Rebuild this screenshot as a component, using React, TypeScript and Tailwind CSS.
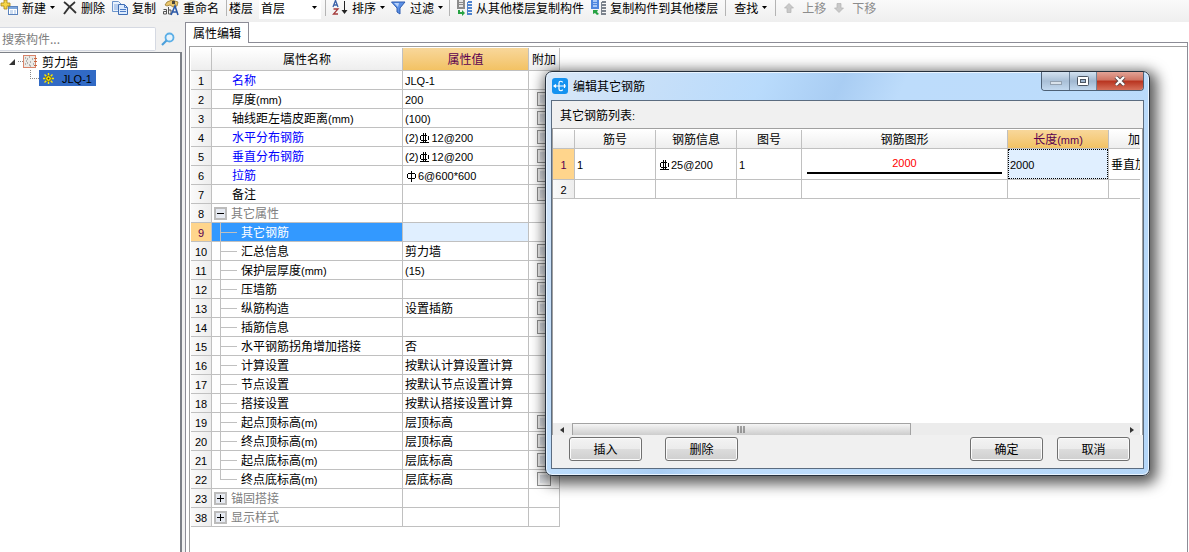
import { Fragment } from "react"
import type { ReactNode } from "react"

type Row = {
  no: number
  name: string
  value?: string
  key?: boolean
  group?: "open" | "closed"
  child?: boolean
  last?: boolean
  check?: boolean
  selected?: boolean
}

const rows: Row[] = [
  { no: 1, name: "名称", value: "JLQ-1", key: true },
  { no: 2, name: "厚度(mm)", value: "200", check: true },
  { no: 3, name: "轴线距左墙皮距离(mm)", value: "(100)", check: true },
  { no: 4, name: "水平分布钢筋", value: "(2)#12@200", key: true, check: true },
  { no: 5, name: "垂直分布钢筋", value: "(2)#12@200", key: true, check: true },
  { no: 6, name: "拉筋", value: "$6@600*600", key: true, check: true },
  { no: 7, name: "备注", check: true },
  { no: 8, name: "其它属性", group: "open" },
  { no: 9, name: "其它钢筋", child: true, selected: true },
  { no: 10, name: "汇总信息", value: "剪力墙", child: true, check: true },
  { no: 11, name: "保护层厚度(mm)", value: "(15)", child: true, check: true },
  { no: 12, name: "压墙筋", child: true, check: true },
  { no: 13, name: "纵筋构造", value: "设置插筋", child: true, check: true },
  { no: 14, name: "插筋信息", child: true, check: true },
  { no: 15, name: "水平钢筋拐角增加搭接", value: "否", child: true },
  { no: 16, name: "计算设置", value: "按默认计算设置计算", child: true },
  { no: 17, name: "节点设置", value: "按默认节点设置计算", child: true },
  { no: 18, name: "搭接设置", value: "按默认搭接设置计算", child: true },
  { no: 19, name: "起点顶标高(m)", value: "层顶标高", child: true, check: true },
  { no: 20, name: "终点顶标高(m)", value: "层顶标高", child: true, check: true },
  { no: 21, name: "起点底标高(m)", value: "层底标高", child: true, check: true },
  { no: 22, name: "终点底标高(m)", value: "层底标高", child: true, last: true, check: true },
  { no: 23, name: "锚固搭接", group: "closed" },
  { no: 38, name: "显示样式", group: "closed" },
]

// steel grade marks: # is the ribbed bar, $ the plain one
const Bar = ({ ribbed }: { ribbed: boolean }) => (
  <svg
    role="img"
    aria-label={ribbed ? "三级钢" : "一级钢"}
    viewBox="0 0 11 11"
    className="mx-px inline-block h-[11px] w-[11px] align-[-2px]"
    fill="none"
    stroke="currentColor"
    shapeRendering="crispEdges">
    {ribbed ? (
      <path d="M2 2.5h6M1.5 3v4M9.5 3v4M2 7.5h6M4.5 0v10M6.5 0v10M1 5.5h0M1 9.5h9" />
    ) : (
      <path d="M2 2.5h7M1.5 3v4M9.5 3v4M2 7.5h7M5.5 0v11" />
    )}
  </svg>
)

const Txt = ({ children }: { children: string }) => (
  <>
    {children.split(/([#$]|[!-"%-~]+)/).map((part, i) => {
      if (part === "#" || part === "$") return <Bar key={i} ribbed={part === "#"} />
      if (/^[!-~]/.test(part))
        return (
          <span key={i} className="font-['Liberation_Sans',sans-serif] text-[11px] leading-none">
            {part}
          </span>
        )
      return <Fragment key={i}>{part}</Fragment>
    })}
  </>
)

const Caret = () => (
  <svg viewBox="0 0 5 3" className="h-[3px] w-[5px] shrink-0" aria-hidden="true">
    <path d="M0 0h5L2.5 3z" fill="#000" />
  </svg>
)

const Sep = () => <span className="h-4 w-px shrink-0 bg-[#b4b4b4]" />

const Tool = ({
  icon,
  label,
  caret,
  disabled,
}: {
  icon?: ReactNode
  label: string
  caret?: boolean
  disabled?: boolean
}) => (
  <button
    type="button"
    disabled={disabled}
    className="flex shrink-0 items-center gap-1 whitespace-nowrap disabled:text-[#8c8c8c]">
    {icon}
    <span>{label}</span>
    {caret && <Caret />}
  </button>
)

const NewIcon = () => (
  <svg viewBox="0 0 18 16" className="h-4 w-[18px]" aria-hidden="true">
    <rect x="8.5" y="6.5" width="9" height="8" fill="#fff" stroke="#5b83bd" />
    <path d="M9 7h8v2H9z" fill="#7da6dc" />
    <path d="M10 11h3m1 0h2m-6 2h3m1 0h2" stroke="#9cbbe3" />
    <path d="M4 0h3v3h3v3H7v3H4V6H1V3h3z" fill="#f6d548" stroke="#a98512" strokeWidth=".8" />
  </svg>
)

const DeleteIcon = () => (
  <svg viewBox="0 0 14 14" className="h-[14px] w-[14px]" aria-hidden="true">
    <path d="M1 1c4 3 8 7 12 11M12 1C8 4 4 8 1 13" stroke="#333" strokeWidth="1.8" fill="none" />
  </svg>
)

const CopyIcon = () => (
  <svg viewBox="0 0 16 16" className="h-4 w-4" aria-hidden="true">
    <path d="M.5 1.5h6l3 3v7h-9z" fill="#e9f2fd" stroke="#6d95cc" />
    <path d="M2 5h4M2 7h4M2 9h4" stroke="#86a9dc" />
    <path d="M6.5 4.5h6l3 3v7h-9z" fill="#dceafc" stroke="#3f6db3" />
    <path d="M12.5 4.5v3h3M8 9.5h6M8 11.5h6" stroke="#4d7cc6" fill="none" />
  </svg>
)

const RenameIcon = () => (
  <svg viewBox="0 0 16 16" className="h-4 w-4" aria-hidden="true">
    <path d="M4 2l5-2 6 2-1 4-4 1-3-2-3 1-2-1z" fill="#eac66c" stroke="#8a6a20" strokeWidth=".7" />
    <path d="M9 1h3v3H9z" fill="#47433c" />
    <path d="M.5 9.5h3v4.500h-3v-2.500h3M5.500 7v7h2.500v-4H5.500" stroke="#555" fill="none" />
    <path d="M8 15l4-9 3 9M9.500 12h5" stroke="#2c59a8" strokeWidth="1.6" fill="none" />
  </svg>
)

const SortIcon = () => (
  <svg viewBox="0 0 16 16" className="h-4 w-4" aria-hidden="true">
    <path d="M1 7l2.500-6.500L6 7M2 5h3" stroke="#3b62a8" strokeWidth="1.3" fill="none" />
    <path d="M1.500 9H6l-4.500 5H6" stroke="#a53c3c" strokeWidth="1.3" fill="none" />
    <path d="M12.500 1v11" stroke="#222" />
    <path d="M9.500 10h6l-3 4z" fill="#222" />
  </svg>
)

const FilterIcon = () => (
  <svg viewBox="0 0 15 14" className="h-[14px] w-[15px]" aria-hidden="true">
    <path d="M.5 1h13.500L9 7v6l-3-2V7z" fill="#5b90e6" stroke="#2f5db0" />
    <path d="M3 2h5L7 6z" fill="#b7d1fa" />
  </svg>
)

const FloorIcon = ({ flip }: { flip?: boolean }) => (
  <svg viewBox="0 0 16 16" className="h-4 w-4" aria-hidden="true">
    <path d="M1 0h8v9H1z" fill={flip ? "#4f86de" : "#8c8c8c"} />
    <path d="M3 0h4v7H3z" fill={flip ? "#a9c8f6" : "#e4e4e4"} />
    <path d="M3 2.5h4M3 4.5h4" stroke={flip ? "#4f86de" : "#8c8c8c"} />
    <path
      d="M11 2h1v-1h4v2h-4v1h4v2h-4v1h4v2h-4v1h4v2h-4v1h4v2h-5z"
      fill={flip ? "#7b828c" : "#4f84cf"}
    />
    <path
      d={flip ? "M3 10h5l-1 2 2 2-2 1-2-2-2 1z" : "M2 10h2v2h2v-2l3 3-3 3v-2H2z"}
      fill="#27a243"
    />
  </svg>
)

const MoveIcon = ({ down }: { down?: boolean }) => (
  <svg viewBox="0 0 10 10" className={`mr-1 h-[10px] w-[10px] ${down ? "rotate-180" : ""}`} aria-hidden="true">
    <path d="M5 .5L9.500 5H7v4.500H3V5H.5z" fill="#c9c9c9" stroke="#b2b2b2" strokeWidth=".7" />
  </svg>
)

const Toolbar = () => (
  <div className="flex h-[22px] shrink-0 items-start overflow-hidden bg-gradient-to-b from-[#fafafa] to-[#efefef]">
    <div className="flex h-[15px] items-center">
      <Tool icon={<NewIcon />} label="新建" caret />
      <div className="ml-2 flex items-center gap-[7px]">
        <Tool icon={<DeleteIcon />} label="删除" />
        <Tool icon={<CopyIcon />} label="复制" />
        <Tool icon={<RenameIcon />} label="重命名" />
        <Sep />
      </div>
      <label htmlFor="floor" className="ml-[2px] shrink-0">
        楼层
      </label>
      <div className="ml-[6px] mr-1 grid h-[22px] w-[62px] shrink-0 items-center bg-white">
        <select id="floor" className="col-start-1 row-start-1 w-full appearance-none bg-transparent pl-[2px] outline-none">
          <option>首层</option>
        </select>
        <span className="pointer-events-none col-start-1 row-start-1 mr-1 justify-self-end">
          <Caret />
        </span>
      </div>
      <div className="flex items-center gap-[6px]">
        <Sep />
        <Tool icon={<SortIcon />} label="排序" caret />
        <Tool icon={<FilterIcon />} label="过滤" caret />
        <Sep />
        <Tool icon={<FloorIcon />} label="从其他楼层复制构件" />
        <Tool icon={<FloorIcon flip />} label="复制构件到其他楼层" />
      </div>
      <div className="ml-[7px] flex items-center gap-2">
        <Sep />
        <Tool label="查找" caret />
        <Sep />
        <Tool icon={<MoveIcon />} label="上移" disabled />
        <Tool icon={<MoveIcon down />} label="下移" disabled />
      </div>
    </div>
  </div>
)

const Sidebar = () => (
  <aside className="flex w-[182px] shrink-0 flex-col pt-1">
    <div className="flex h-[26px] shrink-0 items-center">
      <input
        type="text"
        aria-label="搜索构件"
        placeholder="搜索构件..."
        className="h-6 w-[156px] rounded-r-[2px] border border-l-0 border-[#d5d9e2] bg-white pb-[2px] pl-[2px] outline-none placeholder:text-[#7d7d7d]"
      />
      <button type="button" aria-label="搜索" className="ml-[5px]">
        <svg viewBox="0 0 14 14" className="h-[14px] w-[14px]">
          <circle cx="8.5" cy="5.5" r="4" fill="#e4f2fc" stroke="#5aaee6" strokeWidth="1.8" />
          <path d="M5.500 8.500L1 13" stroke="#4a9fdb" strokeWidth="2.2" />
        </svg>
      </button>
    </div>
    <div className="flex-1 border-r-2 border-t border-[#7c8087] bg-white pt-px">
      <div className="flex h-4 items-center">
        <svg viewBox="0 0 38 16" className="h-4 w-[38px]" aria-hidden="true">
          <path d="M9 11l6-6v6z" fill="#333" />
          <path d="M18 7.500h5" stroke="#888" strokeDasharray="1 1" />
          <rect x="23.5" y="1.5" width="12" height="12" fill="#eceae6" stroke="#d9846a" />
          <path d="M25 4h1m3-1h1m2 2h1M26 7h1m3 1h1m2 2h1M25 10h1m3 1h1m-3-6h1m-1 4h1m2 3h1" stroke="#777" />
          <path d="M34 4.500h3M34 7.500h3M34 11.500h3" stroke="#c8673f" />
        </svg>
        <span className="ml-1">剪力墙</span>
      </div>
      <div className="flex h-4 items-center">
        <svg viewBox="0 0 39 16" className="h-4 w-[39px]" aria-hidden="true">
          <path d="M30.500 0v8M30 8.500h9" stroke="#888" strokeDasharray="1 1" fill="none" />
        </svg>
        <span className="flex h-4 w-[57px] items-center gap-2 bg-[#316ac5] pl-1">
          <svg viewBox="0 0 11 11" className="h-[11px] w-[11px]" aria-hidden="true">
            <path d="M5.500 0v11M0 5.500h11M1.500 1.500l8 8M9.500 1.500l-8 8" stroke="#ffe800" strokeWidth="1.4" />
            <circle cx="5.5" cy="5.5" r="2.8" fill="#ffe800" stroke="#3b3a18" strokeWidth=".7" />
            <circle cx="5.5" cy="5.5" r="1" fill="#3b3a18" />
          </svg>
          <span>
            <Txt>JLQ-1</Txt>
          </span>
        </span>
      </div>
    </div>
  </aside>
)

const NameCell = ({ row }: { row: Row }) => (
  <div className="flex h-[18px] items-center">
    {row.group && (
      <button
        type="button"
        aria-label={row.name}
        aria-expanded={row.group === "open"}
        className="ml-[2px] mr-1 grid h-[13px] w-[13px] place-items-center border-2 border-[#bcbcbc] bg-[#e6eaf2]">
        <svg viewBox="0 0 7 7" className="h-[7px] w-[7px]">
          <path d={row.group === "open" ? "M0 3.500h7" : "M0 3.500h7M3.500 0v7"} stroke="#000" />
        </svg>
      </button>
    )}
    {row.child && (
      <span className="ml-2 mr-1 flex h-[18px] w-[17px] flex-col">
        <span className="h-[9px] border-l border-[#c0c0c0]" />
        <span className="h-px bg-[#c0c0c0]" />
        {!row.last && <span className="h-2 border-l border-[#c0c0c0]" />}
      </span>
    )}
    <span className={row.group || row.child ? "" : "ml-5"}>
      <Txt>{row.name}</Txt>
    </span>
  </div>
)

const PropertyTable = () => (
  <table className="w-[369px] table-fixed border-separate border-spacing-0 leading-[18px]">
    <colgroup>
      <col className="w-[21px]" />
      <col className="w-[191px]" />
      <col className="w-[126px]" />
      <col className="w-[31px]" />
    </colgroup>
    <thead>
      <tr className="h-[23px] bg-gradient-to-b from-white to-[#ededed] *:border-b *:border-r *:border-[#c0c0c0] *:p-0 *:font-normal">
        <th aria-label="序号" />
        <th>属性名称</th>
        <th className="bg-gradient-to-b from-[#f8d79a] to-[#f3c263] text-[#5a0050]">属性值</th>
        <th className="whitespace-nowrap">附加</th>
      </tr>
    </thead>
    <tbody>
      {rows.map((row) => (
        <tr key={row.no} className="h-[19px] *:border-b *:border-r *:border-[#c0c0c0] *:p-0">
          <td
            className={
              row.selected ? "bg-[#ffd58c] text-[#5a0050]" : "bg-gradient-to-r from-[#fafafa] to-[#ededed]"
            }>
            <div className="h-[18px] text-center">
              <Txt>{String(row.no)}</Txt>
            </div>
          </td>
          <td
            className={
              row.selected ? "bg-[#3399ff] text-white" : row.key ? "text-[#0000ff]" : row.group ? "text-[#808080]" : ""
            }>
            <NameCell row={row} />
          </td>
          <td className={row.selected ? "bg-[#e0efff]" : ""}>
            <div className="h-[18px] whitespace-nowrap pl-[2px]">
              <Txt>{row.value ?? ""}</Txt>
            </div>
          </td>
          <td>
            {row.check && (
              <input
                type="checkbox"
                aria-label={`附加 ${row.name}`}
                className="mx-auto block h-[14px] w-[14px] appearance-none border border-[#8e8f8f] bg-gradient-to-br from-[#c9ced6] to-[#f6f6f6] shadow-[inset_0_0_0_2px_#f0f0f0]"
              />
            )}
          </td>
        </tr>
      ))}
    </tbody>
  </table>
)

const DialogButton = ({ children }: { children: string }) => (
  <button
    type="button"
    className="h-6 w-[73px] rounded-[3px] border border-[#707070] bg-[linear-gradient(#f3f3f3_0%,#ebebeb_50%,#dcdcdc_51%,#cfcfcf_100%)] shadow-[inset_0_0_0_1px_#fbfbfb]">
    {children}
  </button>
)

const BarTable = () => (
  <table className="w-[620px] table-fixed border-separate border-spacing-0 leading-4">
    <colgroup>
      <col className="w-[22px]" />
      <col className="w-[81px]" />
      <col className="w-[81px]" />
      <col className="w-[65px]" />
      <col className="w-[206px]" />
      <col className="w-[101px]" />
      <col className="w-16" />
    </colgroup>
    <thead>
      <tr className="h-[19px] bg-gradient-to-b from-white to-[#ededed] *:border-b *:border-r *:border-[#c0c0c0] *:p-0 *:font-normal">
        <th aria-label="序号" />
        <th>筋号</th>
        <th>钢筋信息</th>
        <th>图号</th>
        <th>钢筋图形</th>
        <th className="bg-gradient-to-b from-[#f8d79a] to-[#f3c263] text-[#5a0050]">
          <Txt>长度(mm)</Txt>
        </th>
        <th className="text-left">
          <span className="pl-[19px]">加</span>
        </th>
      </tr>
    </thead>
    <tbody>
      <tr className="h-[31px] *:border-b *:border-r *:border-[#c0c0c0] *:p-0">
        <td className="bg-[#ffd58c] text-center text-[#5a0050]">
          <Txt>1</Txt>
        </td>
        <td>
          <span className="pl-[2px]">
            <Txt>1</Txt>
          </span>
        </td>
        <td>
          <span className="pl-[2px]">
            <Txt>#25@200</Txt>
          </span>
        </td>
        <td>
          <span className="pl-[2px]">
            <Txt>1</Txt>
          </span>
        </td>
        <td>
          <div className="mx-[5px] border-b-2 border-black pb-[2px] text-center text-[#ff0000]">
            <Txt>2000</Txt>
          </div>
        </td>
        <td>
          <div className="flex h-[30px] items-center border border-dotted border-black bg-[#e0efff] pl-px">
            <span>
              <Txt>2000</Txt>
            </span>
          </div>
        </td>
        <td>
          <span className="pl-[2px]">垂直加</span>
        </td>
      </tr>
      <tr className="h-[19px] *:border-b *:border-r *:border-[#c0c0c0] *:p-0">
        <td className="bg-gradient-to-r from-[#fafafa] to-[#ededed] text-center">
          <Txt>2</Txt>
        </td>
        <td />
        <td />
        <td />
        <td />
        <td />
        <td />
      </tr>
    </tbody>
  </table>
)

const RebarDialog = () => (
  <div
    role="dialog"
    aria-labelledby="dialog-title"
    className="absolute left-[545px] top-[71px] flex h-[405px] w-[605px] flex-col rounded-[7px] border border-[#26303c] bg-[linear-gradient(115deg,#dbe9f8_0%,#c9e0f8_12%,#b9dbfc_28%,#a9cdf3_38%,#bddcfb_46%,#bcdcfb_70%,#b4d6f8_100%)] px-[5px] pb-[6px] shadow-[3px_4px_14px_4px_rgba(0,0,0,0.65),inset_0_0_0_1px_#e9f4ff]">
    <div className="flex h-7 shrink-0 items-start justify-between">
      <div className="flex h-7 items-center gap-[5px] pl-px">
        <svg viewBox="0 0 16 16" className="h-4 w-4" aria-hidden="true">
          <rect width="16" height="16" rx="3" fill="#1492f0" />
          <path
            d="M2 8h12M4 6.500L2 8l2 1.500M12.500 6v4M10.500 4.500C10.500 3 7 2.500 7 5v6c0 2.500 3.500 2 3.500 .5"
            stroke="#fff"
            strokeWidth="1.2"
            fill="none"
          />
        </svg>
        <h2 id="dialog-title">编辑其它钢筋</h2>
      </div>
      <div className="flex h-[19px] overflow-hidden rounded-b-[4px] border border-t-0 border-[#4d6075]">
        <button
          type="button"
          aria-label="最小化"
          className="grid w-7 place-items-center border-r border-[#6d8299] bg-gradient-to-b from-[#d4e2f0] via-[#a9bfd6] to-[#c3d9ef]">
          <span className="mt-1 h-1 w-3 border border-[#93a1b0] bg-[#d9e2eb]" />
        </button>
        <button
          type="button"
          aria-label="最大化"
          className="grid w-[27px] place-items-center border-r border-[#6d8299] bg-gradient-to-b from-[#d4e2f0] via-[#a0b7d0] to-[#c3d9ef]">
          <svg viewBox="0 0 12 10" className="h-[10px] w-3">
            <rect x=".5" y=".5" width="11" height="9" rx="1" fill="#fff" stroke="#4b5563" />
            <rect x="3.5" y="3.5" width="5" height="3" fill="#9db4cd" stroke="#4b5563" />
          </svg>
        </button>
        <button
          type="button"
          aria-label="关闭"
          className="grid w-[46px] place-items-center bg-[linear-gradient(#e2a396_0%,#cf7463_45%,#b8331f_50%,#d6705a_100%)]">
          <svg viewBox="0 0 12 10" className="h-[10px] w-3">
            <path d="M2 1l8 8M10 1L2 9" stroke="#5b4444" strokeWidth="4" />
            <path d="M2 1l8 8M10 1L2 9" stroke="#fff" strokeWidth="2.4" />
          </svg>
        </button>
      </div>
    </div>
    <div className="flex min-h-0 flex-1 flex-col border border-[#5b6c80] bg-[#f0f0f0]">
      <p className="h-[27px] shrink-0 px-2 leading-7">
        <Txt>其它钢筋列表:</Txt>
      </p>
      <div className="flex min-h-0 flex-1 flex-col overflow-hidden border border-b-0 border-[#a0a0a0] bg-white pr-[2px] pt-px">
        <div className="flex-1 overflow-hidden">
          <BarTable />
        </div>
        <div className="flex h-3 shrink-0 items-center bg-[#ececec]">
          <svg viewBox="0 0 19 12" className="h-3 w-[19px]" aria-hidden="true">
            <path d="M11 4v6L7 7z" fill="#333" />
          </svg>
          <div className="grid h-3 w-[339px] place-items-center border border-b-0 border-[#a3a3a3] bg-gradient-to-b from-[#f5f5f5] to-[#cdcdcd]">
            <svg viewBox="0 0 9 7" className="h-[7px] w-[9px]" aria-hidden="true">
              <path d="M1 0v7M4 0v7M7 0v7" stroke="#555" />
            </svg>
          </div>
          <svg viewBox="0 0 19 12" className="ml-auto h-3 w-[19px]" aria-hidden="true">
            <path d="M9 4v6l4-3z" fill="#333" />
          </svg>
        </div>
      </div>
      <div className="flex h-[33px] shrink-0 items-start justify-between pl-[17px] pr-[13px] pt-[2px]">
        <div className="flex gap-[23px]">
          <DialogButton>插入</DialogButton>
          <DialogButton>删除</DialogButton>
        </div>
        <div className="flex gap-[14px]">
          <DialogButton>确定</DialogButton>
          <DialogButton>取消</DialogButton>
        </div>
      </div>
    </div>
  </div>
)

const App = () => (
  <div className="relative flex h-screen flex-col overflow-hidden bg-[#f0f0f0] font-['Noto_Sans_CJK_SC',sans-serif] text-[12px] leading-[18px] text-black">
    <Toolbar />
    <div className="flex min-h-0 flex-1">
      <Sidebar />
      <main className="ml-[3px] flex min-w-0 flex-1 flex-col bg-white pr-px">
        <div className="flex h-[21px] shrink-0">
          <div role="tablist" className="flex">
            <button
              type="button"
              role="tab"
              aria-selected="true"
              className="w-16 border border-b-0 border-[#8c8c96]">
              属性编辑
            </button>
          </div>
          <div className="flex-1 border-b border-[#8c8c96]" />
        </div>
        <div className="min-h-0 flex-1 border-x border-[#8c8c96] pl-[3px] pt-[3px]">
          <div className="h-full border-l border-t border-[#a0a0a0] pl-px pt-px">
            <PropertyTable />
          </div>
        </div>
      </main>
    </div>
    <RebarDialog />
  </div>
)

export default App
